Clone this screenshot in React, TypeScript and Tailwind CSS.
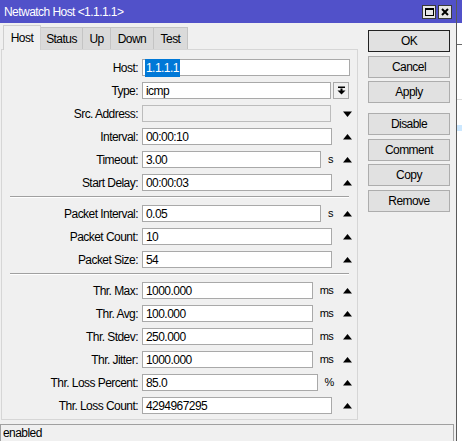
import React from 'react'

type Ctl = 'up' | 'down' | 'drop' | null

interface Field {
  label: string
  value: string
  width: string
  unit?: string
  ctl: Ctl
  disabled?: boolean
  selected?: boolean
}

const groupA: Field[] = [
  { label: 'Host', value: '1.1.1.1', width: 'w-[208px]', ctl: null, selected: true },
  { label: 'Type', value: 'icmp', width: 'w-[189px]', ctl: 'drop' },
  { label: 'Src. Address', value: '', width: 'w-[189px]', ctl: 'down', disabled: true },
  { label: 'Interval', value: '00:00:10', width: 'w-[190px]', ctl: 'up' },
  { label: 'Timeout', value: '3.00', width: 'w-[179px]', unit: 's', ctl: 'up' },
  { label: 'Start Delay', value: '00:00:03', width: 'w-[190px]', ctl: 'up' },
]

const groupB: Field[] = [
  { label: 'Packet Interval', value: '0.05', width: 'w-[179px]', unit: 's', ctl: 'up' },
  { label: 'Packet Count', value: '10', width: 'w-[190px]', ctl: 'up' },
  { label: 'Packet Size', value: '54', width: 'w-[190px]', ctl: 'up' },
]

const groupC: Field[] = [
  { label: 'Thr. Max', value: '1000.000', width: 'w-[171px]', unit: 'ms', ctl: 'up' },
  { label: 'Thr. Avg', value: '100.000', width: 'w-[171px]', unit: 'ms', ctl: 'up' },
  { label: 'Thr. Stdev', value: '250.000', width: 'w-[171px]', unit: 'ms', ctl: 'up' },
  { label: 'Thr. Jitter', value: '1000.000', width: 'w-[171px]', unit: 'ms', ctl: 'up' },
  { label: 'Thr. Loss Percent', value: '85.0', width: 'w-[176px]', unit: '%', ctl: 'up' },
  { label: 'Thr. Loss Count', value: '4294967295', width: 'w-[190px]', ctl: 'up' },
]

const tabs = [
  { name: 'Host', w: 'w-[38px]' },
  { name: 'Status', w: 'w-[42px]' },
  { name: 'Up', w: 'w-[28px]' },
  { name: 'Down', w: 'w-[43px]' },
  { name: 'Test', w: 'w-[34px]' },
]

function Arrow({ dir }: { dir: 'up' | 'down' }) {
  return (
    <svg width="9" height="6" viewBox="0 0 9 6">
      {dir === 'up' ? <polygon points="4.5,0 9,5.5 0,5.5" fill="#000" /> : <polygon points="0,0.5 9,0.5 4.5,6" fill="#000" />}
    </svg>
  )
}

function DropButton() {
  return (
    <div className="ml-[2px] flex h-[17px] w-[16px] items-center justify-center border border-[#a9a9a9] bg-[#f0f0f0]">
      <svg width="9" height="9" viewBox="0 0 9 9">
        <rect x="1" y="0.5" width="7" height="1.5" fill="#000" />
        <rect x="3.5" y="2.5" width="2" height="2.5" fill="#000" />
        <polygon points="0.5,4.5 8.5,4.5 4.5,8.5" fill="#000" />
      </svg>
    </div>
  )
}

function Row({ f }: { f: Field }) {
  return (
    <div className="flex h-[23px] items-center">
      <div className="w-[136px] text-right whitespace-nowrap">{f.label}:</div>
      <div
        className={`ml-[4px] flex h-[17px] items-center border px-[2px] ${f.width} ${
          f.disabled ? 'border-[#bcbcbc] bg-[#f0f0f0]' : 'border-[#a9a9a9] bg-white'
        }`}
      >
        {f.selected ? <span className="bg-[#0078d7] px-[1px] text-white">{f.value}</span> : <span className="pl-[1px]">{f.value}</span>}
      </div>
      {f.ctl === 'drop' && <DropButton />}
      {f.ctl !== 'drop' && f.ctl !== null && (
        <>
          <div className="flex-1 text-center text-[11px]">{f.unit ?? ''}</div>
          <div className="flex w-[17px] items-center justify-center pr-[2px]">
            <Arrow dir={f.ctl} />
          </div>
        </>
      )}
    </div>
  )
}

function Separator() {
  return <div className="mx-[8px] mt-[2px] mb-[4px] border-t border-b border-t-[#a0a0a0] border-b-white" />
}

const buttons = ['OK', 'Cancel', 'Apply', 'Disable', 'Comment', 'Copy', 'Remove']

export default function App() {
  return (
    <div className="flex h-[441px] w-[462px] overflow-hidden bg-white font-['Liberation_Sans',Arial,sans-serif] text-[12px] tracking-[-0.55px] text-black">
      <div className="flex h-full w-[457px] flex-col border-r border-[#5a5a5a] bg-[#f0f0f0]">
        {/* title bar */}
        <div className="flex h-[23px] items-center bg-[#5151c9] pl-[4px] pr-[4px] text-white">
          <span className="flex-1 pt-[1px]">Netwatch Host &lt;1.1.1.1&gt;</span>
          <div className="flex h-[14px] w-[14px] items-center justify-center border border-[#3a3a3a] bg-[#e6e6e6]">
            <div className="h-[8px] w-[9px] border border-t-2 border-black" />
          </div>
          <div className="ml-[2px] flex h-[14px] w-[14px] items-center justify-center border border-[#3a3a3a] bg-[#e6e6e6]">
            <svg width="8" height="8" viewBox="0 0 8 8">
              <path d="M1 1 L7 7 M7 1 L1 7" stroke="#000" strokeWidth="2" />
            </svg>
          </div>
        </div>

        <div className="flex h-[401px]">
          {/* left side: tabs + panel */}
          <div className="flex w-[358px] flex-col">
            <div className="flex h-[26px] items-end pl-[3px]">
              {tabs.map((t, i) =>
                i === 0 ? (
                  <div
                    key={t.name}
                    className={`relative z-10 -mb-px flex h-[25px] items-start justify-center border border-b-0 border-[#cfcfcf] bg-[#f0f0f0] pt-[3px] ${t.w}`}
                  >
                    {t.name}
                  </div>
                ) : (
                  <div
                    key={t.name}
                    className={`flex h-[22px] items-center justify-center border border-l-0 border-b-0 border-[#c4c4c4] bg-[#dadada] ${t.w}`}
                  >
                    {t.name}
                  </div>
                )
              )}
            </div>
            <div className="ml-[1px] flex h-[371px] w-[357px] flex-col border border-[#d6d6d6] pt-[6px]">
              {groupA.map((f) => (
                <Row key={f.label} f={f} />
              ))}
              <Separator />
              {groupB.map((f) => (
                <Row key={f.label} f={f} />
              ))}
              <Separator />
              {groupC.map((f) => (
                <Row key={f.label} f={f} />
              ))}
            </div>
          </div>

          {/* right side: buttons */}
          <div className="ml-[10px] flex flex-col gap-[3.7px] pt-[7px]">
            {buttons.map((b) => (
              <div
                key={b}
                className={`flex h-[22px] w-[82px] items-center justify-center bg-[#e1e1e1] ${
                  b === 'OK' ? 'border border-[#222]' : 'border border-[#adadad]'
                } ${b === 'Disable' ? 'mt-[6px]' : ''}`}
              >
                {b}
              </div>
            ))}
          </div>
        </div>

        {/* status bar */}
        <div className="flex h-[17px] w-[454px] items-center border-t border-r border-l border-[#a0a0a0] pl-[2px]">enabled</div>
      </div>

      {/* sliver of the window behind */}
      <div className="flex flex-1 flex-col">
        <div className="h-[23px] bg-[#5151c9]" />
        <div className="mt-[21px] border-t border-[#6a6a6a]" />
        <div className="mt-[54px] border-t border-[#dcdcdc]" />
        <div className="mt-[25px] h-[6px] bg-[#cce8ff]" />
      </div>
    </div>
  )
}
